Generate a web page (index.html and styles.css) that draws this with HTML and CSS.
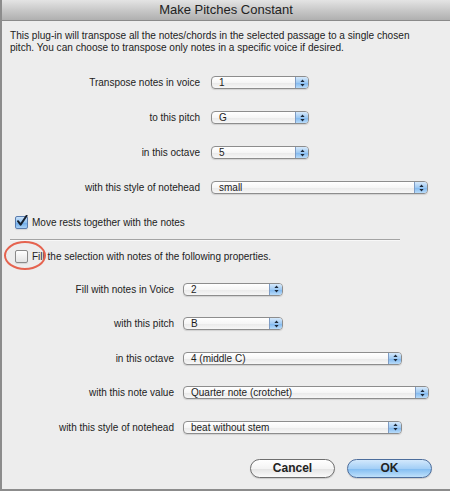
FILE: index.html
```html
<!DOCTYPE html>
<html lang="en">
<head>
    <meta charset="UTF-8">
    <meta name="viewport" content="width=device-width, initial-scale=1.0">
    <title>Make Pitches Constant</title>
    <link rel="stylesheet" href="styles.css">
</head>
<body>
    <div class="window">
        <div class="titlebar">Make Pitches Constant</div>

        <p class="intro">This plug-in will transpose all the notes/chords in the selected passage to a single chosen<br>pitch. You can choose to transpose only notes in a specific voice if desired.</p>

        <div class="fields fields-top">
            <div class="field">
                <span class="label">Transpose notes in voice</span>
                <span class="popup w98"><span class="value">1</span><span class="stepper"><svg width="5" height="8" viewBox="0 0 5 8"><path d="M2.5 0.5 L4.6 3 L0.4 3 Z M0.4 5 L4.6 5 L2.5 7.5 Z" fill="#1d2a3a"/></svg></span></span>
            </div>
            <div class="field">
                <span class="label">to this pitch</span>
                <span class="popup w98"><span class="value">G</span><span class="stepper"><svg width="5" height="8" viewBox="0 0 5 8"><path d="M2.5 0.5 L4.6 3 L0.4 3 Z M0.4 5 L4.6 5 L2.5 7.5 Z" fill="#1d2a3a"/></svg></span></span>
            </div>
            <div class="field">
                <span class="label">in this octave</span>
                <span class="popup w98"><span class="value">5</span><span class="stepper"><svg width="5" height="8" viewBox="0 0 5 8"><path d="M2.5 0.5 L4.6 3 L0.4 3 Z M0.4 5 L4.6 5 L2.5 7.5 Z" fill="#1d2a3a"/></svg></span></span>
            </div>
            <div class="field">
                <span class="label">with this style of notehead</span>
                <span class="popup w217"><span class="value">small</span><span class="stepper"><svg width="5" height="8" viewBox="0 0 5 8"><path d="M2.5 0.5 L4.6 3 L0.4 3 Z M0.4 5 L4.6 5 L2.5 7.5 Z" fill="#1d2a3a"/></svg></span></span>
            </div>
        </div>

        <div class="check check-move">
            <span class="box checked"><svg width="13" height="13" viewBox="0 0 13 13"><path d="M3 6.2 L5.6 9.6 L11.6 0.8" fill="none" stroke="#16202e" stroke-width="2" stroke-linecap="round" stroke-linejoin="round"/></svg></span>
            <span>Move rests together with the notes</span>
        </div>

        <div class="separator"></div>

        <div class="check check-fill">
            <span class="box"></span>
            <span>Fill the selection with notes of the following properties.</span>
            <span class="ring"></span>
        </div>

        <div class="fields fields-bottom">
            <div class="field">
                <span class="label">Fill with notes in Voice</span>
                <span class="popup w100"><span class="value">2</span><span class="stepper"><svg width="5" height="8" viewBox="0 0 5 8"><path d="M2.5 0.5 L4.6 3 L0.4 3 Z M0.4 5 L4.6 5 L2.5 7.5 Z" fill="#1d2a3a"/></svg></span></span>
            </div>
            <div class="field">
                <span class="label">with this pitch</span>
                <span class="popup w100"><span class="value">B</span><span class="stepper"><svg width="5" height="8" viewBox="0 0 5 8"><path d="M2.5 0.5 L4.6 3 L0.4 3 Z M0.4 5 L4.6 5 L2.5 7.5 Z" fill="#1d2a3a"/></svg></span></span>
            </div>
            <div class="field">
                <span class="label">in this octave</span>
                <span class="popup w219"><span class="value">4 (middle C)</span><span class="stepper"><svg width="5" height="8" viewBox="0 0 5 8"><path d="M2.5 0.5 L4.6 3 L0.4 3 Z M0.4 5 L4.6 5 L2.5 7.5 Z" fill="#1d2a3a"/></svg></span></span>
            </div>
            <div class="field">
                <span class="label">with this note value</span>
                <span class="popup w246"><span class="value">Quarter note (crotchet)</span><span class="stepper"><svg width="5" height="8" viewBox="0 0 5 8"><path d="M2.5 0.5 L4.6 3 L0.4 3 Z M0.4 5 L4.6 5 L2.5 7.5 Z" fill="#1d2a3a"/></svg></span></span>
            </div>
            <div class="field">
                <span class="label">with this style of notehead</span>
                <span class="popup w219"><span class="value">beat without stem</span><span class="stepper"><svg width="5" height="8" viewBox="0 0 5 8"><path d="M2.5 0.5 L4.6 3 L0.4 3 Z M0.4 5 L4.6 5 L2.5 7.5 Z" fill="#1d2a3a"/></svg></span></span>
            </div>
        </div>

        <div class="buttons">
            <span class="button">Cancel</span>
            <span class="button default">OK</span>
        </div>
    </div>
</body>
</html>
```

FILE: styles.css
```css
body {
    margin: 0;
    padding: 0;
    background: #ececec;
    font-family: 'Liberation Sans', Arial, sans-serif;
    color: #222;
}
.window {
    width: 450px;
    height: 491px;
    box-sizing: border-box;
    border-left: 2px solid #8c8c8c;
    border-bottom: 2px solid #8c8c8c;
    background: #ededed;
    overflow: hidden;
}
.titlebar {
    height: 20px;
    line-height: 20px;
    text-align: center;
    font-size: 13px;
    color: #222;
    background: linear-gradient(#e4e4e4, #c9c9c9 50%, #b0b0b0);
    border-bottom: 1px solid #8a8a8a;
}
.intro {
    margin: 9px 0 0 8px;
    font-size: 10.1px;
    line-height: 11.5px;
    white-space: nowrap;
}
.fields-top {
    margin-top: 12px;
}
.field {
    display: flex;
    align-items: center;
    height: 35px;
    font-size: 10px;
}
.fields-bottom .field {
    height: 34.5px;
}
.label {
    text-align: right;
}
.fields-top .label {
    width: 198px;
    margin-right: 11px;
}
.fields-bottom .label {
    width: 172px;
    margin-right: 9px;
}
.popup {
    display: flex;
    height: 13px;
    box-sizing: border-box;
    border: 1px solid #8d8d8d;
    border-radius: 4px;
    background: linear-gradient(#ffffff, #f6f6f6 50%, #e9e9e9 51%, #f7f7f7);
    box-shadow: 0 1px 1px rgba(0, 0, 0, 0.12);
    overflow: hidden;
}
.w98 { width: 98px; }
.w100 { width: 100px; }
.w217 { width: 217px; }
.w219 { width: 219px; }
.w246 { width: 246px; }
.value {
    flex: 1;
    padding-left: 7px;
    font-size: 10px;
    line-height: 11px;
    color: #1c1c1c;
}
.stepper {
    width: 12px;
    display: flex;
    align-items: center;
    justify-content: center;
    border-left: 1px solid #7e9cc4;
    background: linear-gradient(#d6e9fb, #9fcaf3 50%, #7db6ee 51%, #b9dcfa);
}
.check {
    position: relative;
    display: flex;
    align-items: center;
    height: 16px;
    padding-left: 13px;
    font-size: 10px;
}
.check-move {
    margin-top: 9px;
}
.check-fill {
    margin-top: 7px;
}
.box {
    width: 13px;
    height: 13px;
    box-sizing: border-box;
    margin-right: 4px;
    border: 1px solid #8a8a8a;
    border-radius: 2px;
    background: linear-gradient(#ffffff, #f1f1f1 50%, #e4e4e4);
    box-shadow: 0 1px 1px rgba(0, 0, 0, 0.1);
}
.box.checked {
    border-color: #5a7cad;
    background: linear-gradient(#c8e1fa, #8fc1f1 50%, #6aa9e9 51%, #a7d0f6);
}
.box svg {
    display: block;
    margin: -2px 0 0 -1px;
}
.separator {
    height: 1px;
    margin: 9px 0 0 8px;
    width: 390px;
    background: #a4a4a4;
    border-bottom: 1px solid #f8f8f8;
}
.ring {
    position: absolute;
    left: 2px;
    top: -7px;
    width: 38px;
    height: 25px;
    border: 2px solid #e5634f;
    border-radius: 50%;
}
.fields-bottom {
    margin-top: 8px;
}
.buttons {
    display: flex;
    justify-content: flex-end;
    gap: 12px;
    margin-top: 14px;
    padding-right: 18px;
}
.button {
    width: 85px;
    height: 19px;
    box-sizing: border-box;
    border: 1px solid #6e6e6e;
    border-radius: 10px;
    text-align: center;
    font-size: 12px;
    font-weight: bold;
    line-height: 17px;
    color: #222;
    background: linear-gradient(#ffffff, #f4f4f4 50%, #e3e3e3 51%, #fafafa);
    box-shadow: 0 1px 1px rgba(0, 0, 0, 0.15);
}
.button.default {
    border-color: #4c6d9c;
    background: linear-gradient(#d2e8fc, #a4cff6 50%, #80bbf1 51%, #bfe1fb);
}
```
